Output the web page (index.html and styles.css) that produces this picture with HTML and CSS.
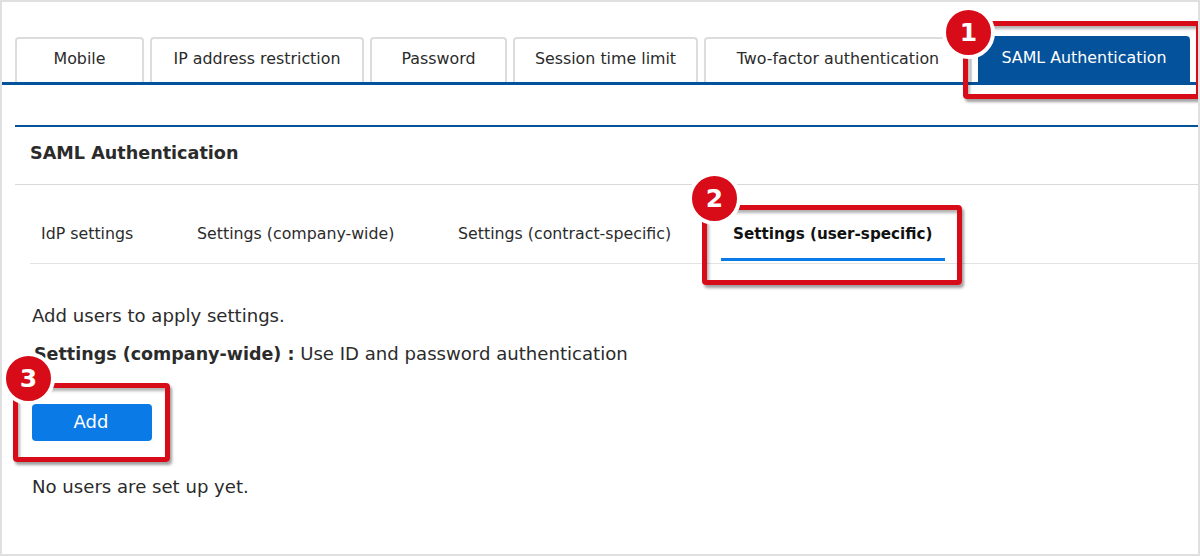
FILE: index.html
```html
<!DOCTYPE html>
<html lang="en">
<head>
<meta charset="utf-8">
<title>SAML Authentication</title>
<link rel="stylesheet" href="styles.css">
</head>
<body>
<div class="frame">
  <nav class="tabs">
    <a class="tab tab-mobile">Mobile</a>
    <a class="tab tab-ip">IP address restriction</a>
    <a class="tab tab-pass">Password</a>
    <a class="tab tab-session">Session time limit</a>
    <a class="tab tab-two">Two-factor authentication</a>
    <a class="tab tab-saml active">SAML Authentication</a>
  </nav>
  <section class="panel">
    <h2 class="title">SAML Authentication</h2>
    <div class="subtabs">
      <a class="subtab sub-idp">IdP settings</a>
      <a class="subtab sub-company">Settings (company-wide)</a>
      <a class="subtab sub-contract">Settings (contract-specific)</a>
      <a class="subtab sub-user current">Settings (user-specific)</a>
    </div>
    <div class="body">
      <p class="line-a">Add users to apply settings.</p>
      <p class="line-b"><strong>Settings (company-wide) :</strong> Use ID and password authentication</p>
      <button class="add">Add</button>
      <p class="line-c">No users are set up yet.</p>
    </div>
  </section>
  <div class="mark mark-1"></div>
  <div class="mark mark-2"></div>
  <div class="mark mark-3"></div>
  <div class="badge badge-1">1</div>
  <div class="badge badge-2">2</div>
  <div class="badge badge-3">3</div>
</div>
</body>
</html>
```
FILE: styles.css
```css
* { box-sizing: border-box; }
html, body { margin: 0; padding: 0; }
body { width: 1200px; height: 556px; overflow: hidden; background: #fff; }
.frame {
  position: relative;
  width: 1200px;
  height: 556px;
  border: 2px solid #e0e0e0;
  font-family: "DejaVu Sans", Verdana, sans-serif;
  font-size: 18.1px;
  color: #2b2b2b;
  background: #fff;
  overflow: hidden;
}
.tabs {
  display: flex;
  gap: 6px;
  align-items: flex-end;
  height: 83px;
  padding: 0 0 0 13px;
  border-bottom: 3px solid #04529b;
  font-size: 15.85px;
}
.tab {
  display: flex;
  align-items: center;
  justify-content: center;
  height: 45px;
  padding-bottom: 5px;
  border: 2px solid #dcdcdc;
  border-bottom: 0;
  border-radius: 4px 4px 0 0;
  white-space: nowrap;
  background: #fff;
}
.tab-mobile { width: 129px; }
.tab-ip { width: 214px; }
.tab-pass { width: 137px; }
.tab-session { width: 185px; }
.tab-two { width: 268px; }
.tab-saml { width: 212px; }
.tab.active {
  height: 46px;
  padding-bottom: 3px;
  background: #04529b;
  border: 0;
  color: #fff;
}
.panel { margin: 40px 0 0 13px; border-top: 2px solid #04529b; }
.title {
  margin: 0;
  height: 58px;
  padding-left: 15px;
  font-size: 17.6px;
  font-weight: 700;
  line-height: 52px;
  border-bottom: 1px solid #d9d9d9;
}
.subtabs {
  display: flex;
  height: 79px;
  margin-left: 15px;
  border-bottom: 1px solid #e3e3e3;
  font-size: 15.8px;
}
.subtab { display: block; line-height: 98px; white-space: nowrap; height: 78px; }
.sub-idp { margin-left: 11px; width: 156px; }
.sub-company { width: 261px; }
.sub-contract { width: 263px; }
.sub-user {
  width: 224px;
  padding-left: 12px;
  font-size: 15.2px;
  font-weight: 700;
  color: #111;
  border-bottom: 3px solid #0a7ae6;
  height: 76px;
}
.body { padding: 0 0 0 17px; }
.body p { margin: 0; }
.body strong { font-size: 17.5px; }
.line-a { padding-top: 40px; line-height: 24px; }
.line-b { padding-top: 14px; line-height: 24px; padding-left: 2px; }
.line-c { padding-top: 34px; line-height: 24px; }
.add {
  display: block;
  margin-top: 38px;
  width: 120px;
  height: 37px;
  padding: 0 2px 2px 0;
  border: 0;
  border-radius: 4px;
  background: #0a7ae6;
  color: #fff;
  font: inherit;
  font-size: 18px;
}
.mark {
  position: absolute;
  border: 5px solid #d70c18;
  border-radius: 4px;
  box-shadow: 2px 3px 3px rgba(0, 0, 0, .38), inset 2px 3px 3px rgba(0, 0, 0, .3);
}
.mark-1 { left: 961px; top: 19px; width: 238px; height: 78px; }
.mark-2 { left: 700px; top: 203px; width: 260px; height: 80px; }
.mark-3 { left: 11px; top: 381px; width: 157px; height: 79px; }
.badge {
  position: absolute;
  width: 53px;
  height: 53px;
  border: 4px solid #fff;
  border-radius: 50%;
  background: #d70c18;
  color: #fff;
  font-family: "DejaVu Sans", sans-serif;
  font-weight: 700;
  font-size: 25px;
  display: flex;
  align-items: center;
  justify-content: center;
  padding-bottom: 1px;
}
.badge-1 { left: 940px; top: 4px; }
.badge-2 { left: 686px; top: 170px; }
.badge-3 { left: 0; top: 350px; }
```
